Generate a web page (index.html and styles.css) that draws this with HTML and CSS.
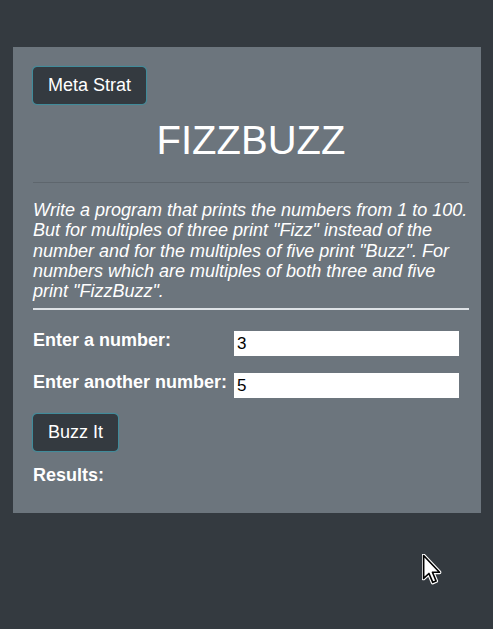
FILE: index.html
```html
<!DOCTYPE html>
<html lang="en">
<head>
<meta charset="utf-8">
<title>FizzBuzz</title>
<link rel="stylesheet" href="styles.css">
</head>
<body>
<main class="card">
  <button class="btn" type="button">Meta Strat</button>
  <h1 class="title">FIZZBUZZ</h1>
  <hr class="rule">
  <p class="desc">Write a program that prints the numbers from 1 to 100. But for multiples of three print "Fizz" instead of the number and for the multiples of five print "Buzz". For numbers which are multiples of both three and five print "FizzBuzz".</p>
  <div class="divider"></div>
  <form class="form">
    <div class="row">
      <label class="label" for="n1">Enter a number:</label>
      <input class="field" id="n1" type="text" value="3">
    </div>
    <div class="row">
      <label class="label" for="n2">Enter another number:</label>
      <input class="field" id="n2" type="text" value="5">
    </div>
    <button class="btn" type="button">Buzz It</button>
    <div class="results">Results:</div>
  </form>
</main>
<svg class="cursor" width="20" height="32" viewBox="0 0 13 21" aria-hidden="true">
  <path d="M1 1 L1 16 L4.5 12.8 L7 18.6 L9.2 17.7 L6.8 12 L11.4 12 Z" fill="#fff" stroke="#fff" stroke-width="2.6" stroke-linejoin="round"/>
  <path d="M1 1 L1 16 L4.5 12.8 L7 18.6 L9.2 17.7 L6.8 12 L11.4 12 Z" fill="#fff" stroke="#000" stroke-width="1.1" stroke-linejoin="round"/>
</svg>
</body>
</html>
```
FILE: styles.css
```css
html, body {
  margin: 0;
  padding: 0;
}
body {
  background: #343a40;
  font-family: "Liberation Sans", Arial, sans-serif;
  font-size: 18px;
  color: #fff;
  height: 629px;
  overflow: hidden;
}
.card {
  margin: 47px 0 0 13px;
  width: 468px;
  box-sizing: border-box;
  background: #6c757d;
  padding: 20px 12px 20px 20px;
  display: flex;
  flex-direction: column;
  align-items: flex-start;
}
.btn {
  font-family: "Liberation Sans", Arial, sans-serif;
  font-size: 18px;
  line-height: 21px;
  color: #fff;
  background: #343a40;
  border: 1px solid #343a40;
  border-radius: 4px;
  padding: 7px 14px;
  box-shadow: 0 0 1px 1px rgba(23, 162, 184, 0.55);
  cursor: pointer;
}
.title {
  align-self: stretch;
  margin: 12px 0 0;
  font-size: 40px;
  line-height: 48px;
  font-weight: 400;
  text-align: center;
}
.rule {
  align-self: stretch;
  margin: 18px 0 0;
  border: 0;
  border-top: 1px solid rgba(0, 0, 0, 0.12);
  height: 0;
}
.desc {
  margin: 17px 0 0;
  font-style: italic;
  line-height: 20.25px;
}
.divider {
  align-self: stretch;
  margin-top: 7px;
  height: 2px;
  background: #dee2e6;
}
.form {
  align-self: stretch;
  display: flex;
  flex-direction: column;
  align-items: flex-start;
  margin-top: 20px;
}
.row {
  display: grid;
  grid-template-columns: 201px 225px;
  align-items: start;
  margin-bottom: 16px;
}
.label {
  font-weight: 700;
  line-height: 20px;
  white-space: nowrap;
}
.field {
  width: 225px;
  height: 25px;
  margin-top: 1px;
  box-sizing: border-box;
  border: 0;
  padding: 1px 3px 0;
  font-family: "Liberation Sans", Arial, sans-serif;
  font-size: 17px;
  color: #000;
  background: #fff;
}
.results {
  margin: 14px 0 8px;
  font-weight: 700;
  line-height: 20px;
}
.cursor {
  position: absolute;
  left: 422px;
  top: 554px;
}
```
